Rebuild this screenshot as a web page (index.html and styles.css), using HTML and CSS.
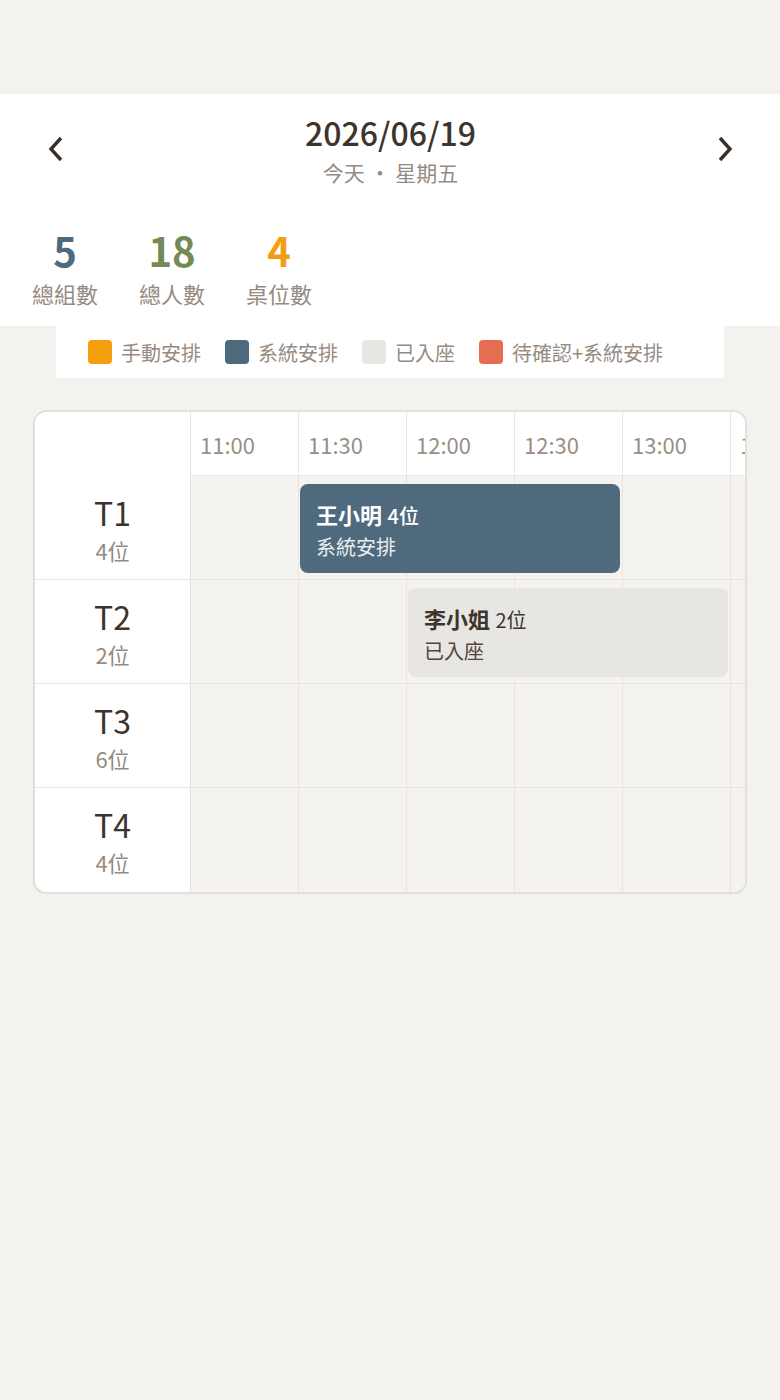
FILE: index.html
```html
<!DOCTYPE html>
<html lang="zh-Hant">
<head>
<meta charset="utf-8">
<meta name="viewport" content="width=device-width, initial-scale=1">
<title>訂位排程</title>
<link rel="stylesheet" href="styles.css">
</head>
<body>

<div class="topgap"></div>

<div class="hdr">
  <div class="datenav">
    <a class="arrow" href="#"><svg width="16" height="26" viewBox="0 0 16 26"><path d="M13 2 L3 13 L13 24" /></svg></a>
    <div class="datebox">
      <p class="date">2026/06/19</p>
      <p class="weekday">今天 ・ 星期五</p>
    </div>
    <a class="arrow" href="#"><svg width="16" height="26" viewBox="0 0 16 26"><path d="M3 2 L13 13 L3 24" /></svg></a>
  </div>

  <div class="stats">
    <div class="stat"><b class="num blue">5</b><span>總組數</span></div>
    <div class="stat"><b class="num green">18</b><span>總人數</span></div>
    <div class="stat"><b class="num orange">4</b><span>桌位數</span></div>
  </div>
</div>

<div class="legend">
  <span class="lg"><i class="sw manual"></i>手動安排</span>
  <span class="lg"><i class="sw system"></i>系統安排</span>
  <span class="lg"><i class="sw seated"></i>已入座</span>
  <span class="lg"><i class="sw pending"></i>待確認+系統安排</span>
</div>

<div class="sched">
  <div class="grid">
    <div class="corner"></div>
    <div class="th">11:00</div><div class="th">11:30</div><div class="th">12:00</div>
    <div class="th">12:30</div><div class="th">13:00</div><div class="th">13:30</div>

    <div class="tb r1"><span class="tname">T1</span><span class="tseat">4位</span></div>
    <div class="td r1 k1"></div><div class="td r1 k2"></div><div class="td r1 k3"></div>
    <div class="td r1 k4"></div><div class="td r1 k5"></div><div class="td r1 k6"></div>
    <div class="bk system r1 k2 span3"><p><b>王小明</b> <em>4位</em></p><p class="st">系統安排</p></div>

    <div class="tb r2"><span class="tname">T2</span><span class="tseat">2位</span></div>
    <div class="td r2 k1"></div><div class="td r2 k2"></div><div class="td r2 k3"></div>
    <div class="td r2 k4"></div><div class="td r2 k5"></div><div class="td r2 k6"></div>
    <div class="bk seated r2 k3 span3"><p><b>李小姐</b> <em>2位</em></p><p class="st">已入座</p></div>

    <div class="tb r3"><span class="tname">T3</span><span class="tseat">6位</span></div>
    <div class="td r3 k1"></div><div class="td r3 k2"></div><div class="td r3 k3"></div>
    <div class="td r3 k4"></div><div class="td r3 k5"></div><div class="td r3 k6"></div>

    <div class="tb r4 last"><span class="tname">T4</span><span class="tseat">4位</span></div>
    <div class="td r4 k1 last"></div><div class="td r4 k2 last"></div><div class="td r4 k3 last"></div>
    <div class="td r4 k4 last"></div><div class="td r4 k5 last"></div><div class="td r4 k6 last"></div>
  </div>
</div>

</body>
</html>
```

FILE: styles.css
```css
body { margin:0; background:#f3f2ee; font-family:"Noto Sans CJK TC", "Noto Sans CJK SC", sans-serif; color:#3d342e; }
p { margin:0; }
em { font-style:normal; }
.topgap { height:94px; }

/* header */
.hdr { background:#fff; padding:18px 0 18px 0; }
.datenav { display:flex; align-items:center; justify-content:space-between; padding:0 47px 0 48px; }
.arrow { display:block; width:16px; height:26px; }
.arrow svg { display:block; }
.arrow path { fill:none; stroke:#3a302a; stroke-width:3.4; stroke-linecap:butt; stroke-linejoin:miter; }
.datebox { text-align:center; }
.date { font-size:32px; line-height:40px; font-weight:500; color:#3d342e; }
.weekday { font-size:21px; line-height:28px; margin-top:6px; color:#968b82; }

.stats { display:flex; gap:41px; padding-left:32px; margin-top:42px; }
.stat { display:flex; flex-direction:column; align-items:center; }
.stat .num { font-size:40px; line-height:44px; font-weight:700; }
.stat span { font-size:22px; line-height:30px; margin-top:6px; color:#968b82; }
.blue { color:#4e6a7c; }
.green { color:#738a55; }
.orange { color:#f29e12; }

/* legend */
.legend { background:#fff; margin:0 56px; height:52px; padding:0 32px; display:flex; align-items:center; gap:24px; }
.lg { display:flex; align-items:center; gap:9px; font-size:20px; color:#968b82; white-space:nowrap; }
.sw { display:block; width:24px; height:24px; border-radius:4px; }
.sw.manual { background:#f4a00e; }
.sw.system { background:#4e6a7c; }
.sw.seated { background:#e8e6e2; }
.sw.pending { background:#e56e52; }

/* schedule */
.sched { margin:32px 33px 0 33px; border:2px solid #e3e0db; border-radius:14px; overflow:hidden; background:#fff; box-shadow:0 1px 1px rgba(0,0,0,.06); }
.grid { display:grid; grid-template-columns:156px repeat(6, 108px); grid-template-rows:64px repeat(4, 104px); width:max-content; }
.corner { background:#fff; border-right:1px solid #e6e3de; }
.th { background:#fff; border-right:1px solid #ebe8e3; border-bottom:1px solid #ebe8e3; font-size:22px; color:#9a8f86; padding-left:9px; display:flex; align-items:center; }
.tb { grid-column:1; background:#fff; border-right:1px solid #e6e3de; border-bottom:1px solid #e8e5e0; display:flex; flex-direction:column; align-items:center; justify-content:center; }
.tname { font-size:32px; line-height:42px; color:#3d342e; }
.tseat { font-size:22px; line-height:30px; margin-top:2px; color:#968b82; }
.td { background:#f4f3f0; border-right:1px solid #e8e5e0; border-bottom:1px solid #e8e5e0; }
.last { border-bottom:none; }
.r1 { grid-row:2; }
.r2 { grid-row:3; }
.r3 { grid-row:4; }
.r4 { grid-row:5; }
.k1 { grid-column-start:2; }
.k2 { grid-column-start:3; }
.k3 { grid-column-start:4; }
.k4 { grid-column-start:5; }
.k5 { grid-column-start:6; }
.k6 { grid-column-start:7; }

.bk { margin:8px 3px 7px 1px; border-radius:8px; padding:15px 16px 0 16px; z-index:1; }
.bk p { font-size:20px; line-height:30px; }
.bk b { font-size:22px; font-weight:700; }
.bk em { margin-left:1px; }
.bk p.st { line-height:28px; margin-top:2px; }
.span3 { grid-column-end:span 3; }
.bk.system { background:#4e6a7c; color:#fff; }
.bk.system em { font-weight:500; }
.bk.system .st { color:#e8edf0; }
.bk.seated { background:#e8e6e2; color:#3d342e; }
.bk.seated .st { color:#4f4640; }
```
